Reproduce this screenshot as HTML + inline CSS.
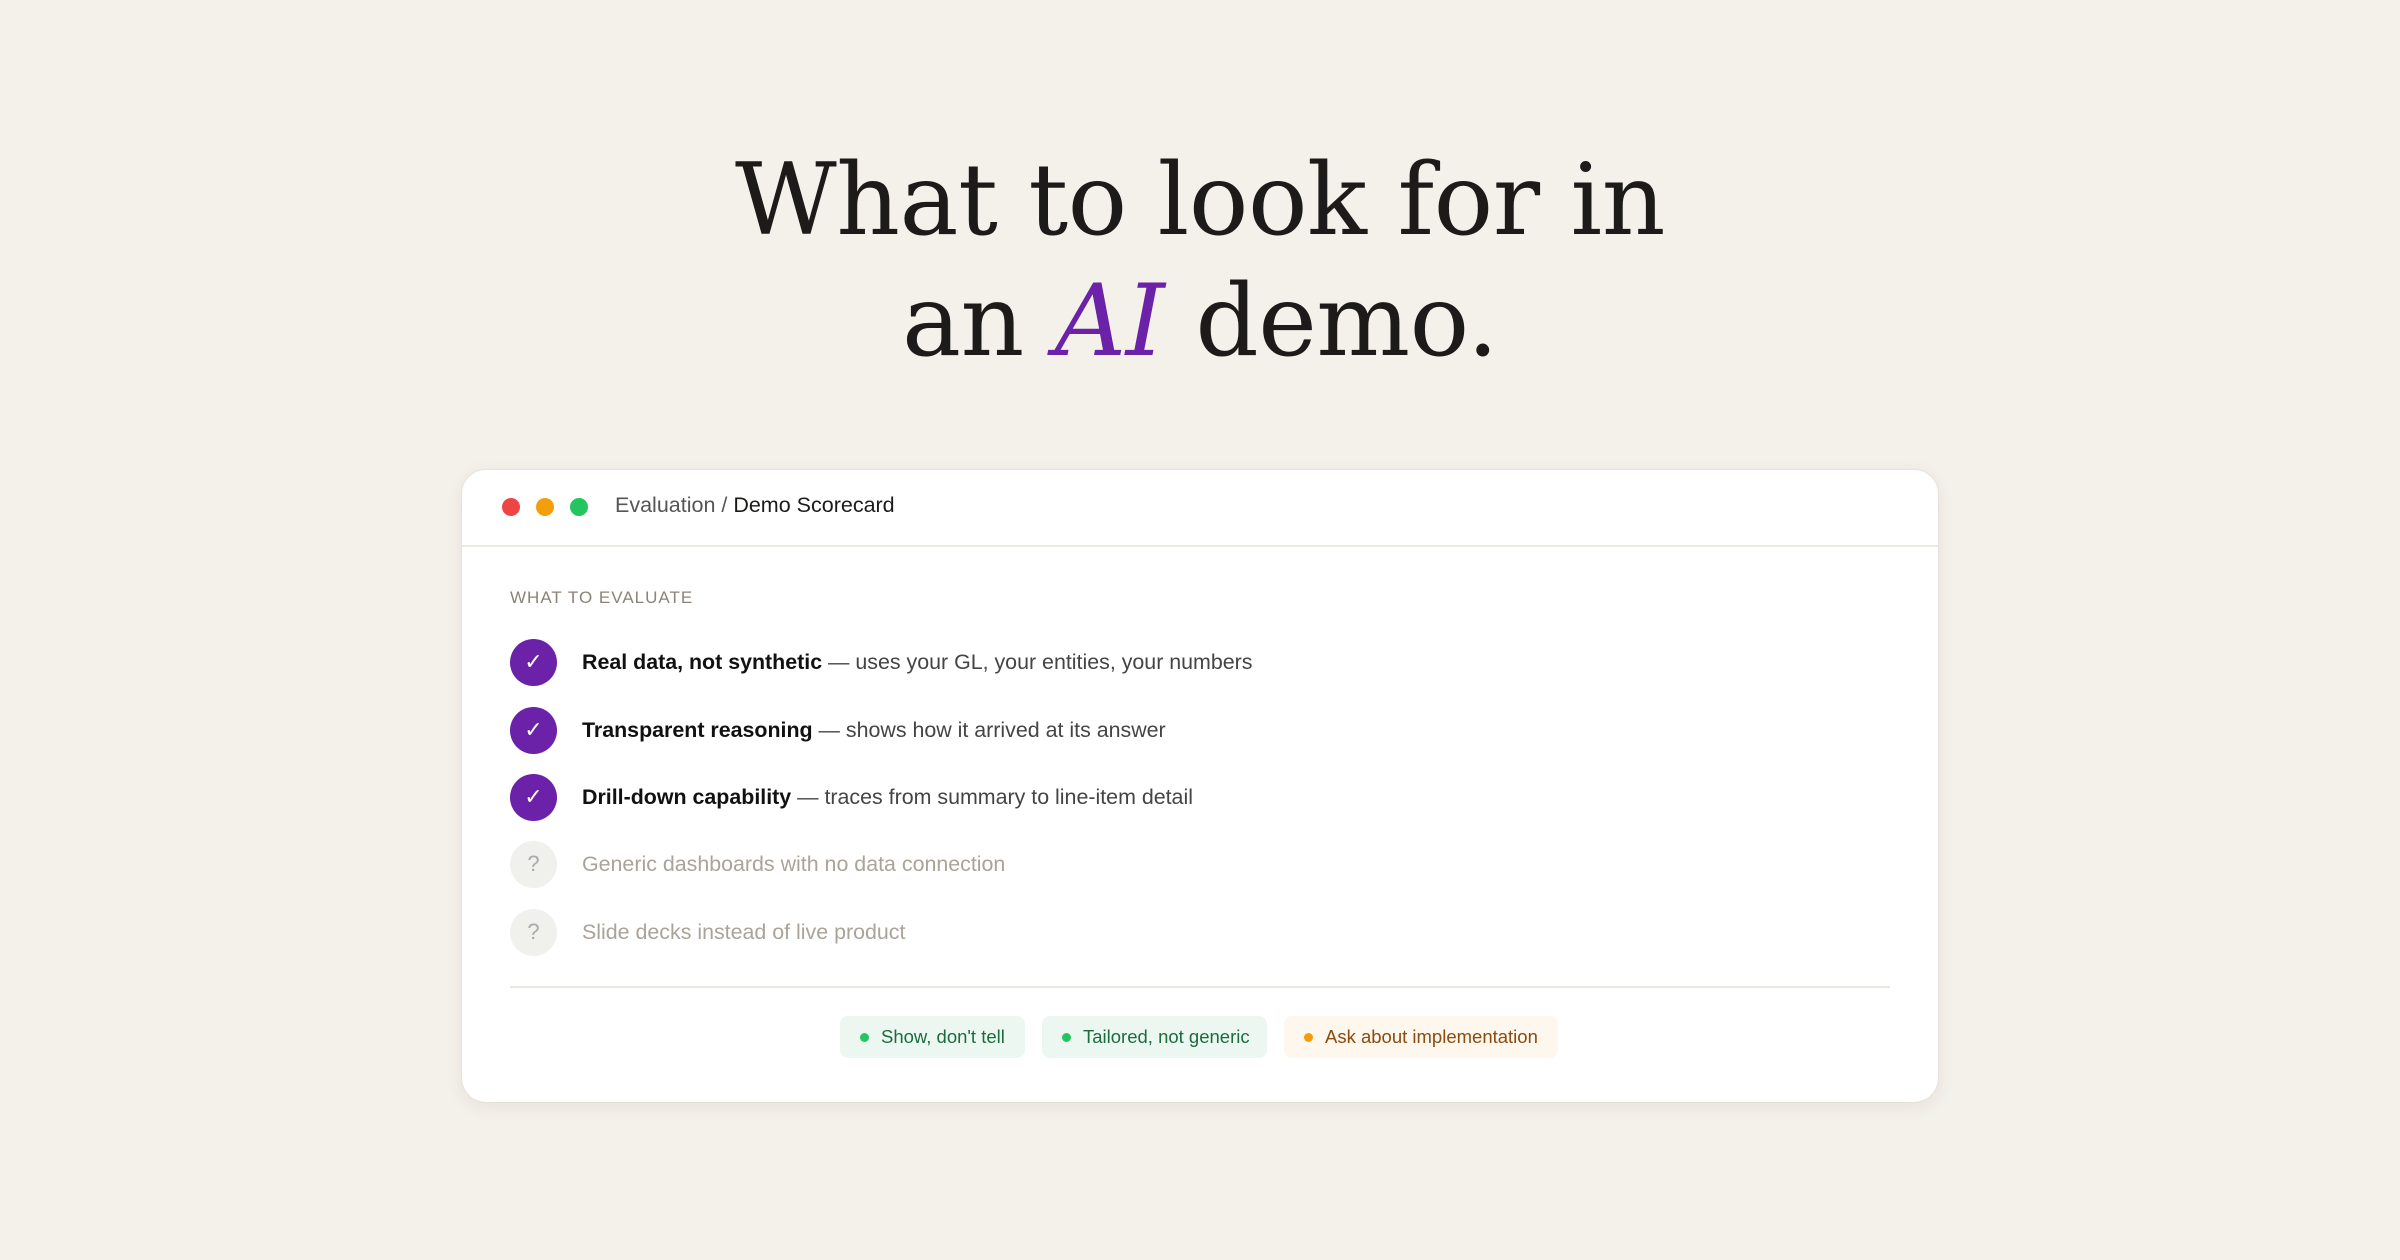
<!DOCTYPE html>
<html><head><meta charset="utf-8"><style>
*{margin:0;padding:0;box-sizing:border-box}
body{width:2400px;height:1260px;background:#f4f0ea;position:relative;overflow:hidden;font-family:"Liberation Sans",sans-serif}
h1{position:absolute;left:0;width:2400px;top:140px;text-align:center;font-family:"DejaVu Serif",serif;font-weight:400;font-size:99px;line-height:121px;color:#1c1b1a;letter-spacing:-0.5px}
h1 em{color:#6b21a8}
.card{position:absolute;left:462px;top:470px;width:1476px;height:632px;background:#fff;border-radius:24px;box-shadow:0 4px 18px rgba(80,60,30,.08),0 0 0 1px rgba(0,0,0,.03)}
.hdr{height:77px;border-bottom:2px solid #ece9e4;position:relative}
.dot{position:absolute;top:28px;width:18px;height:18px;border-radius:50%}
.ttl{position:absolute;left:153px;top:23px;font-size:21.5px;color:#1c1b1a}
.ttl span{color:#555}
.lbl{position:absolute;left:48px;top:118px;font-size:17px;letter-spacing:1px;color:#8a8378}
.row{position:absolute;left:48px;height:48px;display:flex;align-items:center;font-size:21.4px;color:#444}
.row b{color:#111;font-weight:700}
.c{width:47px;height:47px;border-radius:50%;background:#6b21a8;color:#fff;display:flex;align-items:center;justify-content:center;font-size:22px;margin-right:25px;flex:none}
.q{background:#f0f0ec;color:#aaa}
.g{color:#aaa39a}
.div{position:absolute;left:48px;right:48px;top:516px;height:2px;background:#ebe8e3}
.chip{position:absolute;top:546px;height:42px;border-radius:8px;display:flex;align-items:center;font-size:18.5px;padding-left:20px}
.chip i{width:9px;height:9px;border-radius:50%;margin-right:12px;display:inline-block}
</style></head><body>
<h1>What to look for in<br>an <em>AI</em> demo.</h1>
<div class="card">
<div class="hdr">
<div class="dot" style="left:40px;background:#ef4444"></div>
<div class="dot" style="left:74px;background:#f59e0b"></div>
<div class="dot" style="left:108px;background:#22c55e"></div>
<div class="ttl"><span>Evaluation / </span>Demo Scorecard</div>
</div>
<div class="lbl">WHAT TO EVALUATE</div>
<div class="row" style="top:168px"><div class="c">✓</div><span><b>Real data, not synthetic</b> — uses your GL, your entities, your numbers</span></div>
<div class="row" style="top:236px"><div class="c">✓</div><span><b>Transparent reasoning</b> — shows how it arrived at its answer</span></div>
<div class="row" style="top:303px"><div class="c">✓</div><span><b>Drill-down capability</b> — traces from summary to line-item detail</span></div>
<div class="row" style="top:370px"><div class="c q">?</div><span class="g">Generic dashboards with no data connection</span></div>
<div class="row" style="top:438px"><div class="c q">?</div><span class="g">Slide decks instead of live product</span></div>
<div class="div"></div>
<div class="chip" style="left:378px;width:185px;background:#edf7f1;color:#1d6b3d"><i style="background:#22c55e"></i>Show, don't tell</div>
<div class="chip" style="left:580px;width:225px;background:#edf7f1;color:#1d6b3d"><i style="background:#22c55e"></i>Tailored, not generic</div>
<div class="chip" style="left:822px;width:274px;background:#fdf7ee;color:#8a4a10"><i style="background:#f59e0b"></i>Ask about implementation</div>
</div>
</body></html>
